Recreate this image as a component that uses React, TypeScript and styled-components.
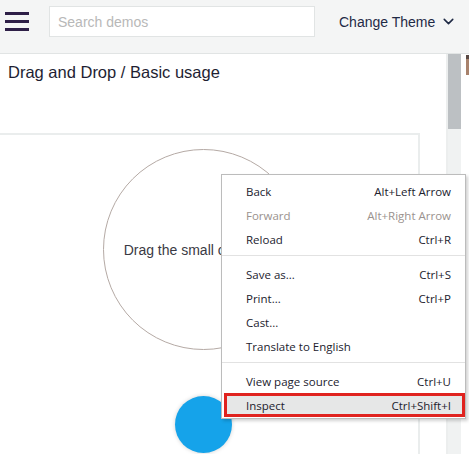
import styled, { createGlobalStyle } from "styled-components";
import { ChevronDown } from "lucide-react";

const GlobalStyle = createGlobalStyle`
  html, body {
    margin: 0;
    padding: 0;
    background: #ffffff;
    font-family: "Liberation Sans", Arial, sans-serif;
  }
`;

const Page = styled.div`
  position: relative;
  width: 469px;
  height: 454px;
  overflow: hidden;
  background: #ffffff;
`;

const Header = styled.header`
  display: flex;
  align-items: center;
  height: 31px;
  padding: 6px 0 16px;
  background: #f4f5f5;
  border-bottom: 1px solid #e1e4e4;
`;

const Burger = styled.button`
  display: flex;
  flex-direction: column;
  justify-content: space-between;
  width: 24px;
  height: 19px;
  margin: 0 20px 0 5px;
  padding: 0;
  border: 0;
  background: none;

  span {
    display: block;
    height: 3px;
    background: #2e1f47;
  }
`;

const Search = styled.input`
  box-sizing: border-box;
  width: 266px;
  height: 31px;
  padding: 0 8px;
  border: 1px solid #e1e4e4;
  background: #ffffff;
  font-family: "Liberation Sans", Arial, sans-serif;
  font-size: 14px;
  outline: none;

  &::placeholder {
    color: #b8b8b8;
  }
`;

const ThemeButton = styled.button`
  display: flex;
  align-items: center;
  gap: 5px;
  margin-left: 24px;
  padding: 0;
  border: 0;
  background: none;
  color: #1f2a45;
  font-family: "Liberation Sans", Arial, sans-serif;
  font-size: 14px;
`;

const Body = styled.div`
  display: flex;
  height: 400px;
`;

const Main = styled.main`
  flex: 1;
  min-width: 0;
`;

const Title = styled.h1`
  margin: 0;
  padding: 8px 0 0 8px;
  height: 71px;
  font-size: 16.5px;
  font-weight: 400;
  line-height: 20px;
  color: #1e1e32;
`;

const Card = styled.section`
  display: flex;
  flex-direction: column;
  align-items: center;
  gap: 46px;
  width: 434px;
  height: 340px;
  margin-left: -14px;
  padding-top: 14px;
  border: 2px solid #eaeded;
  box-sizing: border-box;
  background: #ffffff;
`;

const DropZone = styled.div`
  display: flex;
  align-items: center;
  justify-content: center;
  flex: none;
  width: 201px;
  height: 201px;
  border: 1px solid #b5aaa5;
  border-radius: 50%;
  box-sizing: border-box;
  font-size: 14px;
  color: #3a3a44;
  white-space: nowrap;
`;

const Ball = styled.div`
  flex: none;
  width: 57px;
  height: 57px;
  border-radius: 50%;
  background: #15a3ea;
  box-shadow: 0 0 4px rgba(0, 0, 0, 0.18);
`;

const ScrollTrack = styled.div`
  display: flex;
  flex-direction: column;
  width: 13px;
  border-left: 2px solid #eceeee;
  background: #f0f2f2;
`;

const Thumb = styled.div`
  height: 75px;
  background: #bcc0c3;
`;

const Gutter = styled.div`
  width: 8px;
  padding: 1px 0 0 5px;
  box-sizing: border-box;
`;

const Mark = styled.div`
  width: 3px;
  height: 20px;
  background: linear-gradient(#5a4a44 0 4px, #a8826c 4px);
`;

const Menu = styled.ul`
  position: absolute;
  top: 174px;
  left: 221px;
  width: 245px;
  margin: 0;
  padding: 4px 0 1px;
  list-style: none;
  background: #ffffff;
  border: 1px solid #bcbcbc;
  box-shadow: 2px 2px 3px rgba(0, 0, 0, 0.18);
  font-family: "Open Sans", "Noto Sans", sans-serif;
  font-size: 11.5px;
  box-sizing: border-box;
`;

const Item = styled.li<{ $disabled?: boolean; $active?: boolean }>`
  display: flex;
  justify-content: space-between;
  align-items: center;
  height: 24px;
  box-sizing: border-box;
  padding: ${(p) => (p.$active ? "0 11px 0 19px" : "0 14px 0 24px")};
  margin: ${(p) => (p.$active ? "0 0 0 2px" : "0")};
  border: ${(p) => (p.$active ? "3px solid #e0231f" : "0")};
  background: ${(p) => (p.$active ? "#e6e7e7" : "transparent")};
  color: ${(p) => (p.$disabled ? "#9a928e" : "#22222e")};
`;

const Separator = styled.li`
  height: 1px;
  margin: 4px 0 6px;
  background: #e2e2e2;
`;

const menu: ({ label: string; key?: string; disabled?: boolean; active?: boolean } | null)[] = [
  { label: "Back", key: "Alt+Left Arrow" },
  { label: "Forward", key: "Alt+Right Arrow", disabled: true },
  { label: "Reload", key: "Ctrl+R" },
  null,
  { label: "Save as...", key: "Ctrl+S" },
  { label: "Print...", key: "Ctrl+P" },
  { label: "Cast..." },
  { label: "Translate to English" },
  null,
  { label: "View page source", key: "Ctrl+U" },
  { label: "Inspect", key: "Ctrl+Shift+I", active: true },
];

export default function App() {
  return (
    <Page>
      <GlobalStyle />
      <Header>
        <Burger aria-label="menu">
          <span />
          <span />
          <span />
        </Burger>
        <Search placeholder="Search demos" />
        <ThemeButton>
          Change Theme
          <ChevronDown size={17} strokeWidth={2.2} color="#1f2a45" />
        </ThemeButton>
      </Header>
      <Body>
        <Main>
          <Title>Drag and Drop / Basic usage</Title>
          <Card>
            <DropZone>Drag the small circle here</DropZone>
            <Ball />
          </Card>
        </Main>
        <ScrollTrack>
          <Thumb />
        </ScrollTrack>
        <Gutter>
          <Mark />
        </Gutter>
      </Body>
      <Menu>
        {menu.map((item, i) =>
          item ? (
            <Item key={i} $disabled={item.disabled} $active={item.active}>
              <span>{item.label}</span>
              {item.key && <span>{item.key}</span>}
            </Item>
          ) : (
            <Separator key={i} />
          )
        )}
      </Menu>
    </Page>
  );
}
